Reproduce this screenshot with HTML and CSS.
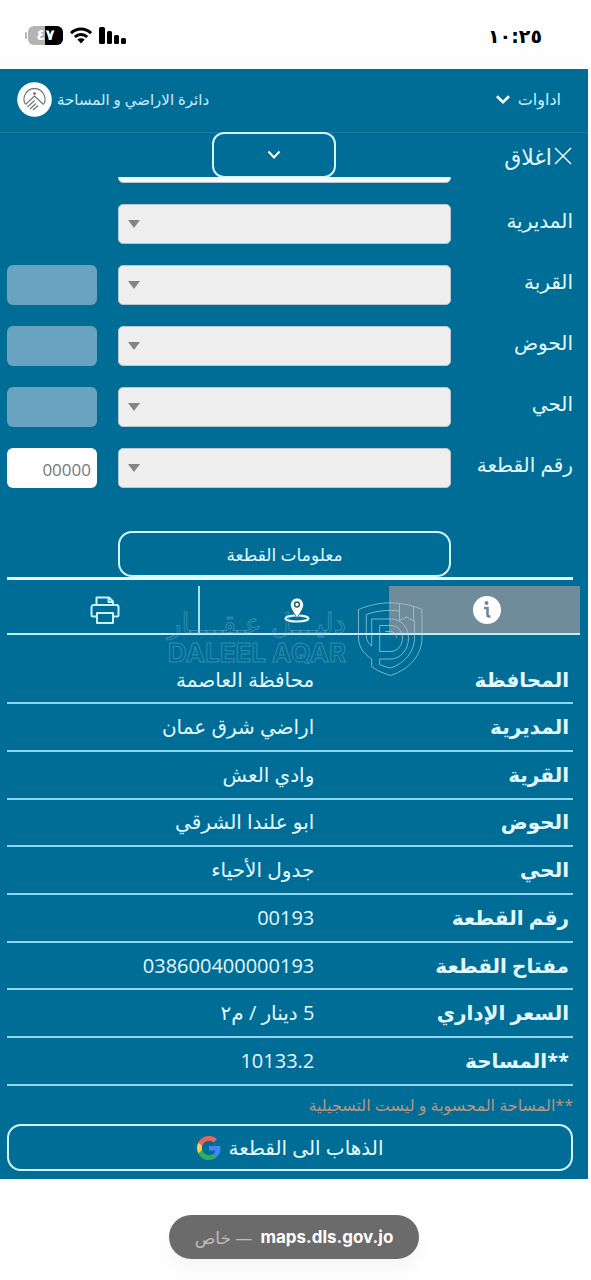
FILE: index.html
```html
<!DOCTYPE html>
<html lang="ar" dir="rtl">
<head>
<meta charset="utf-8">
<meta name="viewport" content="width=device-width, initial-scale=1">
<title>دائرة الاراضي و المساحة</title>
<link rel="stylesheet" href="styles.css">
</head>
<body>
<div class="status">
  <time class="status-time">١٠:٢٥</time>
  <div class="status-icons">
    <svg width="28" height="18" viewBox="0 0 28 18" aria-hidden="true"><g fill="#000"><rect x="0" y="0" width="6" height="17" rx="1.5"/><rect x="8" y="4" width="5" height="13" rx="1.5"/><rect x="15" y="8" width="5" height="9" rx="1.5"/><rect x="22" y="11" width="5" height="6" rx="1.5"/></g></svg>
    <svg width="22" height="17" viewBox="0 0 22 17" aria-hidden="true"><g fill="none" stroke="#000" stroke-width="3"><path d="M1 6.200C6.500 .7 15.500 .7 21 6.200"/><path d="M4.800 10C8.400 6.600 13.600 6.600 17.200 10"/></g><path d="M7.300 12.600c2.200-1.900 5.200-1.900 7.400 0L11 16.500z"/></svg>
    <span class="battery"><span class="battery-level">٤٧</span></span>
  </div>
</div>

<main class="app">
  <header class="topbar">
    <button class="tools" type="button">اداوات
      <svg width="16" height="11" viewBox="0 0 14 10" aria-hidden="true"><path d="M1.500 2L7 7.500 12.500 2" fill="none" stroke="#fff" stroke-width="2.400"/></svg>
    </button>
    <div class="brand">
      <span>دائرة الاراضي و المساحة</span>
      <svg width="35" height="35" viewBox="0 0 35 35" aria-hidden="true"><circle cx="17.500" cy="17.500" r="17.300" fill="#fff"/><g fill="none" stroke="#6b7174" stroke-width="1.100"><path d="M8.200 22A10.500 10.500 0 1 1 26.800 22"/><path d="M8.500 22.500l9-8.500 9 8.500M10.500 25l7-6.500M13 27l6-5.500M16 28l5-4.500"/></g><circle cx="17.500" cy="11.500" r="1.500" fill="#8a7c58"/></svg>
    </div>
  </header>

  <div class="subbar">
    <button class="close" type="button">
      <svg width="18" height="18" viewBox="0 0 18 18" aria-hidden="true"><path d="M1 1l16 16M17 1L1 17" fill="none" stroke="#eefbff" stroke-width="1.500"/></svg>اغلاق
    </button>
    <button class="collapse" type="button" aria-label="طي">
      <svg width="14" height="10" viewBox="0 0 14 10" aria-hidden="true"><path d="M1.500 1.500L7 7.500 12.500 1.500" fill="none" stroke="#fff" stroke-width="2"/></svg>
    </button>
  </div>

  <form class="search">
    <div class="field field-clipped">
      <select class="pick-input" aria-label="المحافظة"><option></option></select>
    </div>
    <div class="field">
      <label for="dir">المديرية</label>
      <div class="pick"><select class="pick-input" id="dir"><option></option></select><svg class="caret" width="12" height="8" viewBox="0 0 12 8"><path d="M0 0h12L6 8z"/></svg></div>
    </div>
    <div class="field">
      <label for="village">القربة</label>
      <div class="pick"><select class="pick-input" id="village"><option></option></select><svg class="caret" width="12" height="8" viewBox="0 0 12 8"><path d="M0 0h12L6 8z"/></svg></div>
      <input class="code" disabled aria-label="رمز القرية">
    </div>
    <div class="field">
      <label for="basin">الحوض</label>
      <div class="pick"><select class="pick-input" id="basin"><option></option></select><svg class="caret" width="12" height="8" viewBox="0 0 12 8"><path d="M0 0h12L6 8z"/></svg></div>
      <input class="code" disabled aria-label="رمز الحوض">
    </div>
    <div class="field">
      <label for="quarter">الحي</label>
      <div class="pick"><select class="pick-input" id="quarter"><option></option></select><svg class="caret" width="12" height="8" viewBox="0 0 12 8"><path d="M0 0h12L6 8z"/></svg></div>
      <input class="code" disabled aria-label="رمز الحي">
    </div>
    <div class="field">
      <label for="plot">رقم القطعة</label>
      <div class="pick"><select class="pick-input" id="plot"><option></option></select><svg class="caret" width="12" height="8" viewBox="0 0 12 8"><path d="M0 0h12L6 8z"/></svg></div>
      <input class="code" placeholder="00000" aria-label="رقم القطعة">
    </div>
    <div class="submit-row">
      <button class="outline submit" type="button">معلومات القطعة</button>
    </div>
  </form>

  <section class="result">
    <div class="tabs">
      <button class="tab tab-active" type="button" aria-label="معلومات">
        <svg width="28" height="28" viewBox="0 0 28 28"><circle cx="14" cy="14" r="14" fill="#fff"/><circle cx="13.500" cy="7" r="2" fill="#6f8997"/><path d="M11 12h3.500v6.500q0 2 1.500 2h1.500" fill="none" stroke="#6f8997" stroke-width="2.600"/></svg>
      </button>
      <button class="tab" type="button" aria-label="الموقع">
        <svg width="26" height="26" viewBox="0 0 26 26"><ellipse cx="13" cy="21.500" rx="11.500" ry="3" fill="none" stroke="#eefbff" stroke-width="2.200"/><path d="M13 21C10 16 6.500 12 6.500 7.500a6.500 6.500 0 0 1 13 0C19.500 12 16 16 13 21z" fill="#fff" stroke="#006d96" stroke-width=".8"/><circle cx="13" cy="7.500" r="2.400" fill="#fff" stroke="#1f607b" stroke-width="1.500"/></svg>
      </button>
      <button class="tab" type="button" aria-label="طباعة">
        <svg width="30" height="28" viewBox="0 0 30 28"><g fill="none" stroke="#c8f1ff" stroke-width="2" stroke-linejoin="round"><path d="M6.500 9V1.500h12.500L23 5.500V9"/><path d="M18.500 1.500v4.500H23"/><path d="M7 20.500H3a1.500 1.500 0 0 1-1.500-1.500V11a2 2 0 0 1 2-2h23a2 2 0 0 1 2 2v8a1.500 1.500 0 0 1-1.500 1.500H23"/><rect x="7" y="17" width="16" height="10"/></g></svg>
      </button>
    </div>
    <table class="facts">
      <tr><th scope="row">المحافظة</th><td>محافظة العاصمة</td></tr>
      <tr><th scope="row">المديرية</th><td>اراضي شرق عمان</td></tr>
      <tr><th scope="row">القرية</th><td>وادي العش</td></tr>
      <tr><th scope="row">الحوض</th><td>ابو علندا الشرقي</td></tr>
      <tr><th scope="row">الحي</th><td>جدول الأحياء</td></tr>
      <tr><th scope="row">رقم القطعة</th><td>00193</td></tr>
      <tr><th scope="row">مفتاح القطعة</th><td>038600400000193</td></tr>
      <tr><th scope="row">السعر الإداري</th><td>5 دينار / م٢</td></tr>
      <tr><th scope="row">**المساحة</th><td>10133.2</td></tr>
    </table>
    <p class="note">**المساحة المحسوبة و ليست التسجيلية</p>
    <div class="goto-row">
      <button class="outline goto" type="button">الذهاب الى القطعة
        <svg width="24" height="24" viewBox="0 0 48 48" aria-hidden="true"><path fill="#f06352" d="M24 9.500c3.540 0 6.710 1.220 9.210 3.600l6.850-6.850C35.900 2.380 30.470 0 24 0 14.620 0 6.510 5.380 2.560 13.220l7.980 6.190C12.430 13.720 17.740 9.500 24 9.500z"/><path fill="#4285f4" d="M46.980 24.550c0-1.570-.15-3.090-.38-4.550H24v9.020h12.940c-.58 2.960-2.260 5.480-4.780 7.180l7.730 6c4.510-4.180 7.090-10.360 7.090-17.650z"/><path fill="#fbd04a" d="M10.530 28.590c-.48-1.450-.76-2.990-.76-4.590s.27-3.140.76-4.590l-7.980-6.190C.92 16.460 0 20.120 0 24c0 3.880.92 7.540 2.560 10.780l7.970-6.190z"/><path fill="#2fae62" d="M24 48c6.480 0 11.930-2.130 15.890-5.810l-7.730-6c-2.150 1.450-4.920 2.300-8.160 2.300-6.260 0-11.570-4.220-13.470-9.910l-7.980 6.190C6.510 42.620 14.620 48 24 48z"/></svg>
      </button>
    </div>
    <div class="watermark" aria-hidden="true">
      <svg width="66" height="76" viewBox="0 0 66 76"><g fill="none" stroke="#a5cbd9" stroke-opacity=".75" stroke-width="1"><path d="M32.500 .8C43 1 54 3 64 7.500V35c0 18-12 32-31.500 38.500C25 71 18 68.500 13.700 64.500V57C4.500 51 .5 44 .5 35V7.500C11 3 22 1 32.500 .8z"/><path d="M41.500 9C30 7.500 18 9 8.300 12.500V34c0 4 2 7.500 5.400 10V17h18.800C43 17 50.500 25 50.500 36S43 57 32.500 57H21.700v5.500c3 1.500 7 2.700 10.800 3.500C47 61 56.500 50 56.500 35V18.500"/><path d="M21.700 23.500h10.800c7 0 12 5.500 12 12.500s-5 13.500-12 13.500H21.700z"/><path d="M27 29.500h5.500c3.500 0 6 3 6 6.500"/><path d="M41.500 2v16.500l7-3.500 7 4V4.500"/></g></svg>
      <div class="watermark-words"><span class="watermark-ar">دليـــل عـقــــار</span><span class="watermark-en">DALEEL AQAR</span></div>
    </div>
  </section>
</main>

<footer class="browser">
  <div class="address"><bdi class="host">maps.dls.gov.jo</bdi><span>— خاص</span></div>
</footer>
</body>
</html>
```
FILE: styles.css
```css
* { box-sizing: border-box; }

body {
  margin: 0;
  padding-right: 3px;
  background: #fefefe;
  color: #e2f8ff;
  font-family: "Open Sans", "DejaVu Sans", sans-serif;
  font-size: 20px;
}

button, input, select { font: inherit; color: inherit; margin: 0; }
button { background: none; border: 0; padding: 0; }

.status {
  height: 69px;
  display: flex;
  justify-content: space-between;
  align-items: center;
  padding: 2px 46px 0 28px;
  color: #000;
}
.status-time { font: bold 19px "DejaVu Sans", sans-serif; }
.status-icons { display: flex; align-items: center; gap: 7px; }
.battery {
  position: relative;
  width: 35px;
  height: 19px;
  border-radius: 6px;
  background: linear-gradient(to left, #000 50%, #b4b4b4 50%);
  display: grid;
  place-items: center;
}
.battery::after {
  content: "";
  position: absolute;
  left: -3px;
  top: 6px;
  width: 2px;
  height: 7px;
  border-radius: 2px;
  background: #b4b4b4;
}
.battery-level { font: bold 15px "DejaVu Sans", sans-serif; line-height: 19px; color: #fff; }

.app { background: #006d96; padding-bottom: 8px; }

.topbar {
  height: 64px;
  display: flex;
  justify-content: space-between;
  align-items: center;
  padding: 0 27px 3px 17px;
  border-bottom: 1px solid #1c7c9f;
  font-size: 15px;
}
.tools, .brand { display: flex; align-items: center; color: #c9eefa; }
.tools { gap: 7px; font-size: 16px; }
.brand { gap: 5px; }

.subbar {
  height: 44px;
  display: grid;
  grid-template-columns: 236fr 124px 212fr;
  padding-right: 16px;
}
.close { display: flex; align-items: center; justify-self: start; font-size: 22px; gap: 2px; }
.collapse {
  height: 46px;
  margin-top: -1px;
  border: 2px solid #d3f4ff;
  border-radius: 12px;
  display: grid;
  place-items: center;
}

.search { padding: 0 15px 0 7px; display: grid; gap: 21px; }
.field {
  display: grid;
  grid-template-columns: 101px 1fr 90px;
  column-gap: 21px;
  height: 40px;
}
.field label { line-height: 34px; white-space: nowrap; }
.field-clipped {
  height: 6px;
  grid-template-rows: 100%;
  align-items: end;
  overflow: hidden;
}
.field-clipped .pick-input { grid-column: 2; background: #f4fbfe; }
.pick { display: grid; align-items: center; }
.pick-input {
  width: 100%;
  height: 40px;
  appearance: none;
  background: #eee;
  border: 1px solid #b9c6d2;
  border-radius: 5px;
  grid-area: 1 / 1;
}
.caret { grid-area: 1 / 1; justify-self: end; margin-left: 10px; fill: #858585; pointer-events: none; }
.code {
  width: 100%;
  height: 40px;
  border: 0;
  border-radius: 6px;
  padding: 2px 6px 0;
  background: #fff;
  font-size: 17px;
}
.code:disabled { background: #6aa3bf; }
.code::placeholder { color: #777; opacity: 1; }

.outline { border: 2px solid #d3f4ff; border-radius: 14px; }
.submit-row { padding: 22px 122px 0 111px; }
.submit { width: 100%; height: 46px; font-size: 17px; }

.result { position: relative; padding: 0 8px 0 7px; }
.tabs {
  border-bottom: 2px solid #bfeeff;
  display: grid;
  grid-template-columns: repeat(3, 1fr);
}
.tabs::before {
  content: "";
  grid-column: 1 / -1;
  height: 3px;
  margin: 0 7px 6px 0;
  background: #e6faff;
}
.tab { height: 47px; padding-left: 4px; display: grid; place-items: center; }
.tab-active { background: #708c9b; }
.tab:nth-child(2) { border-left: 2px solid #a8def0; }

.facts {
  width: calc(100% - 7px);
  height: 429px;
  margin: 22px 7px 0 0;
  border-collapse: collapse;
  table-layout: fixed;
}
.facts th, .facts td {
  text-align: right;
  line-height: 28px;
  padding: 0 4px 0 0;
  border-bottom: 2px solid #8fd6ee;
}
.facts th { width: 45%; }

.note { margin: 0 7px 0 0; font-size: 16px; line-height: 38px; color: #b99582; }
.goto-row { padding-right: 7px; }
.goto {
  width: 100%;
  height: 47px;
  display: flex;
  align-items: center;
  justify-content: center;
  gap: 8px;
}

.watermark {
  position: absolute;
  top: 25px;
  right: 164px;
  display: flex;
  gap: 12px;
  pointer-events: none;
}
.watermark-words {
  display: flex;
  flex-direction: column;
  padding-top: 4px;
  color: transparent;
  -webkit-text-stroke: 1px #7fb4c870;
}
.watermark-ar { font: 28px/36px "DejaVu Sans", sans-serif; white-space: nowrap; }
.watermark-en { font: bold 26px/22px Inter, sans-serif; white-space: nowrap; }

.browser { padding: 36px 0 21px; display: flex; justify-content: center; }
.address {
  height: 44px;
  padding: 0 26px;
  border-radius: 22px;
  background: #6b6b6b;
  box-shadow: 0 12px 14px #00000008;
  display: flex;
  align-items: center;
  gap: 8px;
  color: #bdbdbd;
  font-size: 17px;
}
.host { color: #fff; font: bold 17px Inter, sans-serif; }
```
